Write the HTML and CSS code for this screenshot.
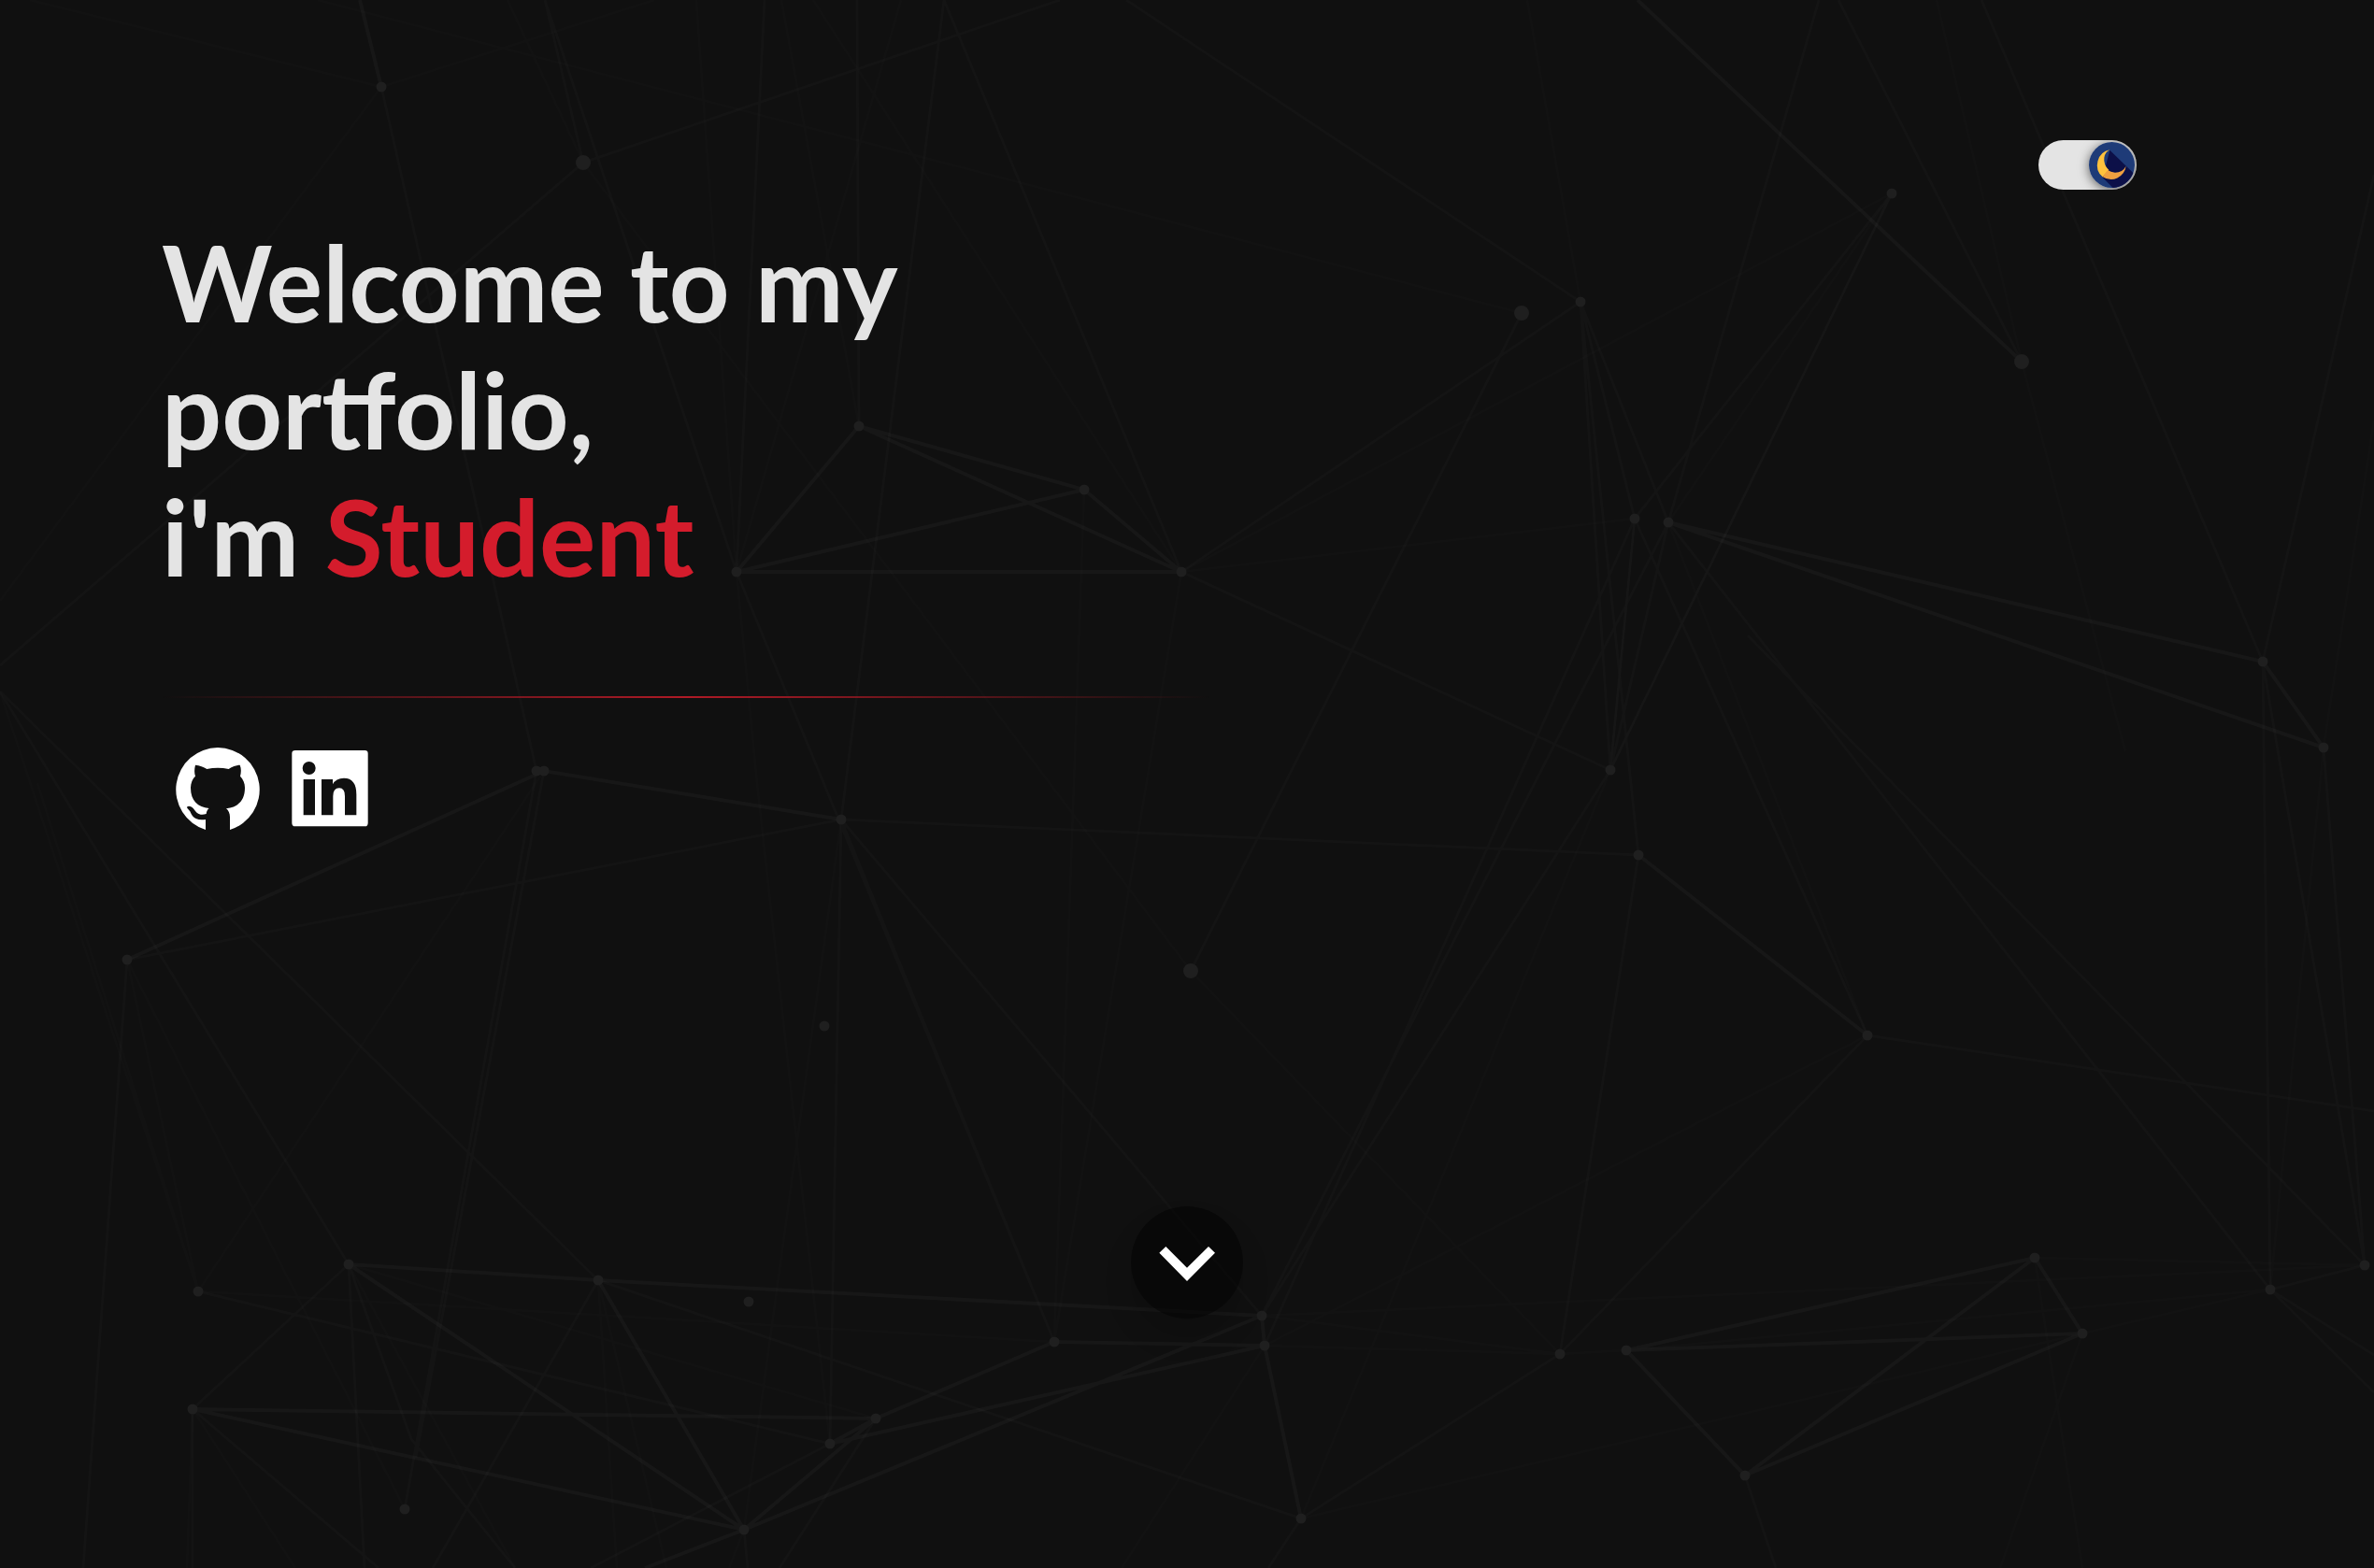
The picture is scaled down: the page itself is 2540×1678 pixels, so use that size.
FILE: index.html
```html
<!DOCTYPE html>
<html lang="en">
<head>
<meta charset="utf-8">
<meta name="viewport" content="width=device-width, initial-scale=1">
<title>Portfolio</title>
<link rel="stylesheet" href="styles.css">
</head>
<body>
<svg class="network" viewBox="0 0 2540 1678" preserveAspectRatio="xMidYMid slice" aria-hidden="true">
  <path class="link link-faint" d="M32 0L408 93L0 643M543 0L624 174L1274 1039M745 0L788 612L810 838L888 1545M870 0L1264 612M964 0L788 612M836 0L919 456M340 0L1628 335M700 0L408 93M582 825L212 1382M136 1027L433 1615M136 1027L212 1382M0 740L212 1382M40 838L212 1382M900 877L796 1637M1160 524L1128 1436M1264 612L1128 1436M212 1382L1128 1436M373 1353L937 1518M373 1353L551 1678M640 1370L660 1678M640 1370L713 1678M206 1508L316 1678M206 1508L200 1678M796 1637L780 1678M1634 0L1691 323M2072 0L2163 387L2274 804M2024 207L1264 612M2024 207L1723 824M1723 824L1749 555L1264 612M1785 559L1998 1108L1353 1440M1723 824L1392 1625M1353 1440L1200 1678M1350 1408L1669 1449M1350 1408L2530 1354M1353 1440L1669 1449L1740 1445L2429 1380L2228 1427L1392 1625M2177 1346L2530 1354M2177 1346L2228 1678M2228 1427L2140 1678M2486 800L2429 1380M2486 800L2540 450M1274 1039L1669 1449M1785 559L2024 207"/>
  <path class="link" d="M624 174L1134 0M624 174L583 0L788 612L1128 1436M818 0L788 612M917 0L919 456M1010 0L900 877M1010 0L1264 612M1205 0L1691 323L1264 612M0 740L640 1370M0 740L373 1353M0 712L624 174M136 1027L89 1678M408 93L574 825L433 1615M582 825L445 1560M136 1027L900 877L1753 915M900 877L1350 1408M900 877L888 1545M900 877L1128 1436M373 1353L206 1508L206 1678M373 1353L390 1678M373 1353L440 1540L551 1678M212 1382L888 1545M640 1370L1392 1625M206 1508L405 1678M640 1370L463 1678M937 1518L834 1678M888 1545L632 1678M796 1637L800 1678M1274 1039L1628 335M1967 0L2163 387M1946 0L1785 559M2120 0L2421 708L2540 187M2024 207L1749 555M2024 207L1723 824L1785 559M1691 323L1753 915M1691 323L1785 559L1350 1408M1749 555L1353 1440M1723 824L1350 1408M1749 555L1998 1108M1264 612L1723 824M1691 323L1749 555L1723 824L1691 323M1753 915L1669 1449M1785 559L2429 1380M1870 680L2530 1354M2421 708L2429 1380M2421 708L2530 1354L2486 800M1998 1108L2540 1189M1669 1449L1998 1108M1669 1449L1392 1625L1357 1678M1867 1579L1900 1678M2530 1354L2429 1380L2540 1450M2429 1380L2540 1490"/>
  <path class="link link-strong" d="M385 0L408 93M1752 0L2163 387M788 612L919 456L1160 524L1264 612L788 612L1160 524M919 456L1264 612M136 1027L582 825L900 877M373 1353L640 1370L1350 1408M373 1353L796 1637L206 1508L937 1518L1128 1436L1353 1440L888 1545M640 1370L796 1637L1350 1408M937 1518L888 1545M937 1518L796 1637L690 1678M1350 1408L1353 1440L1392 1625M2486 800L1785 559L2421 708L2486 800M1753 915L1998 1108M1740 1445L2177 1346L2228 1427L1740 1445L1867 1579L2177 1346M1867 1579L2228 1427"/>
  <path class="node" d="M408 93h0M919 456h0M1160 524h0M1264 612h0M788 612h0M574 825h0M582 825h0M900 877h0M136 1027h0M882 1098h0M212 1382h0M373 1353h0M640 1370h0M801 1393h0M206 1508h0M937 1518h0M888 1545h0M433 1615h0M796 1637h0M1128 1436h0M1350 1408h0M1353 1440h0M1392 1625h0M1669 1449h0M1740 1445h0M1867 1579h0M2177 1346h0M2228 1427h0M2429 1380h0M2530 1354h0M1998 1108h0M1753 915h0M1723 824h0M1749 555h0M1785 559h0M1691 323h0M2024 207h0M2421 708h0M2486 800h0"/>
  <path class="node node-large" d="M624 174h0M1628 335h0M1274 1039h0M2163 387h0"/>
</svg>

<main class="page">
  <header class="topbar">
    <label class="theme">
      <input class="theme-input" type="checkbox" role="switch" aria-label="Dark mode" checked>
      <span class="theme-knob">
        <svg viewBox="0 0 147 147" aria-hidden="true">
          <circle cx="73.500" cy="73.500" r="73.500" fill="#1e3b78"/>
          <path d="M67 26L142 99A73.500 73.500 0 0 1 77 147L44 114Z" fill="#0c1048"/>
          <path d="M67 25A50 50 0 0 0 44 112L64 90Q46 72 49 50Q52 32 67 25Z" fill="#ffc23d"/>
          <path d="M44 112A49 49 0 0 0 119 77Q108 98 84 98Q70 97 60 90Z" fill="#f0a040"/>
        </svg>
      </span>
    </label>
  </header>

  <section class="hero">
    <h1 class="title">Welcome to my portfolio,<br>i'm <span class="accent">Student</span></h1>
    <hr class="rule">
    <nav class="social" aria-label="Social links">
      <a class="social-link" href="#github" aria-label="GitHub">
        <svg viewBox="0 0 300 300" aria-hidden="true"><path d="M147 12A135 135 0 0 0 108 276V243C70 249 63 228 58 217C54 210 48 208 48 203C53 197 64 202 70 209C79 222 88 232 110 225C111 217 114 211 119 207C83 203 60 183 60 141C60 126 66 112 75 104C71 93 72 80 75 68C88 68 102 75 112 81C135 76 159 76 182 81C194 73 207 68 218 68C223 80 222 93 219 104C228 113 234 126 234 141C234 183 211 203 174 208C181 213 186 224 186 235V276A135 135 0 0 0 147 12Z"/></svg>
      </a>
      <a class="social-link" href="#linkedin" aria-label="LinkedIn">
        <svg viewBox="-12 -6 300 300" aria-hidden="true"><path fill-rule="evenodd" d="M24 15H247Q257 15 257 25V248Q257 259 247 259H24Q13 259 13 248V25Q13 15 24 15ZM68 51A21 21 0 1 0 68 93A21 21 0 1 0 68 51ZM50 108V223H87V108ZM108 108V223H145V162Q145 136 165 136Q183 136 183 162V223H220V157Q220 104 180 104Q154 104 144 124V108Z"/></svg>
      </a>
    </nav>
  </section>

  <a class="scroll-down" href="#about" aria-label="Scroll down">
    <svg viewBox="0 0 360 360" aria-hidden="true"><path d="M91 149L112 129L180 197L249 129L270 149L180 240Z"/></svg>
  </a>
</main>
</body>
</html>
```
FILE: styles.css
```css
* {
  box-sizing: border-box;
}

body {
  margin: 0;
  background: #101010;
  color: #e4e4e4;
  font-family: Lato, "Liberation Sans", sans-serif;
}

/* Particle network behind the page */
.network {
  position: fixed;
  inset: 0;
  z-index: -1;
  width: 100%;
  height: 100%;
}

.link {
  fill: none;
  stroke: #fff;
  stroke-width: 3;
  stroke-opacity: 0.02;
}

.link-faint {
  stroke-opacity: 0.01;
}

.link-strong {
  stroke-width: 4;
  stroke-opacity: 0.03;
}

.node {
  stroke: #1f1f1f;
  stroke-width: 11;
  stroke-linecap: round;
}

.node-large {
  stroke-width: 16;
}

.page {
  display: flex;
  flex-direction: column;
  min-height: 100vh;
  padding-bottom: 267px;
}

.topbar {
  display: flex;
  justify-content: flex-end;
  padding: 150px 10% 0;
}

.theme {
  display: flex;
  align-items: center;
  justify-content: flex-end;
  width: 105px;
  height: 53px;
  padding-right: 2px;
  border-radius: 27px;
  background: #e4e4e4;
  overflow: hidden;
  cursor: pointer;
}

.theme-input {
  flex: 1;
  height: 100%;
  margin: 0;
  appearance: none;
  cursor: pointer;
}

.theme-knob {
  width: 49px;
  height: 49px;
  border-radius: 50%;
  box-shadow: 0 2px 12px rgba(0, 0, 0, 0.6);
}

.theme-knob svg,
.social-link svg,
.scroll-down svg {
  display: block;
  width: 100%;
  height: 100%;
}

.hero {
  width: 51%;
  margin-top: 30px;
  padding-left: 173px;
}

.title {
  margin: 0;
  font-size: 113px;
  line-height: 136px;
  font-weight: 700;
}

.accent {
  color: #d41c2c;
}

.rule {
  height: 2px;
  margin: 104px 0 49px;
  border: 0;
  background: linear-gradient(to right, transparent, #b01a26, transparent);
}

.social {
  display: flex;
  gap: 20px;
  padding-left: 11px;
}

.social-link {
  width: 100px;
  height: 100px;
  fill: #fff;
}

.scroll-down {
  width: 120px;
  height: 120px;
  margin: auto auto 0;
  border-radius: 50%;
  background: rgba(0, 0, 0, 0.5);
  box-shadow: 0 20px 30px rgba(0, 0, 0, 0.15);
  fill: #fff;
}
```
